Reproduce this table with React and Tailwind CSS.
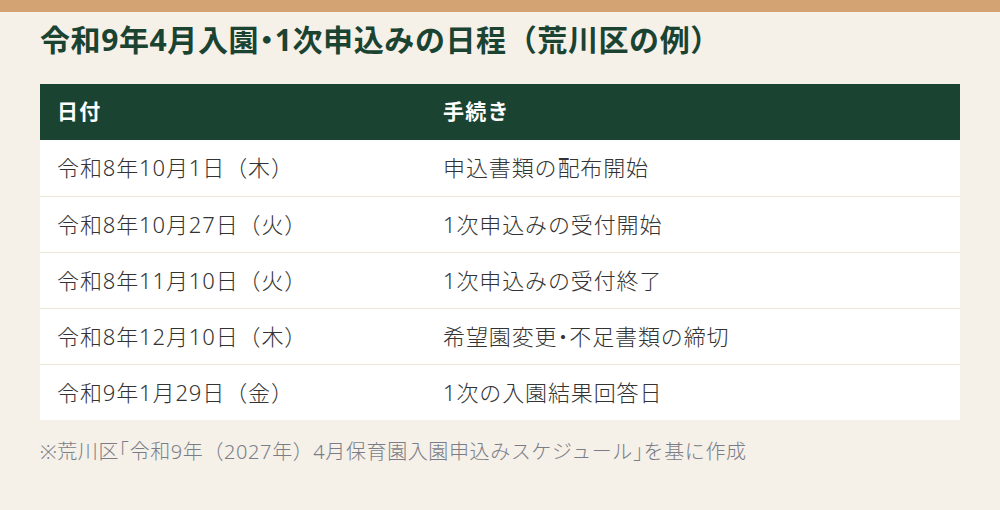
import React from "react";

const H = ({ children }) => (
  <span className="[font-feature-settings:'halt']">{children}</span>
);

const rows = [
  ["令和8年10月1日（木）", "申込書類の配布開始"],
  ["令和8年10月27日（火）", "1次申込みの受付開始"],
  ["令和8年11月10日（火）", "1次申込みの受付終了"],
  ["令和8年12月10日（木）", <>希望園変更<H>・</H>不足書類の締切</>],
  ["令和9年1月29日（金）", "1次の入園結果回答日"],
];

export default function App() {
  return (
    <div
      className="w-[1000px] h-[510px] bg-[#f5f0e8] overflow-hidden"
      style={{ fontFamily: '"Noto Sans", "Noto Sans CJK JP", sans-serif' }}
    >
      <div className="h-[12px] bg-[#d4a373]" />
      <div className="px-[40px]">
        <h1 className="mt-[6px] text-[30px] leading-[44px] font-bold text-[#1b4332] tracking-[0.02em]">
          令和9年4月入園<H>・</H>1次申込みの日程（荒川区の例）
        </h1>
        <table className="mt-[22px] w-[920px] border-collapse">
          <thead>
            <tr className="bg-[#1b4332] text-white h-[56px]">
              <th className="w-[387px] text-left pl-[17px] text-[21px] font-bold tracking-[0.06em]">日付</th>
              <th className="text-left pl-[16px] text-[21px] font-bold tracking-[0.06em]">手続き</th>
            </tr>
          </thead>
          <tbody>
            {rows.map((r, i) => (
              <tr
                key={i}
                className={
                  "bg-white h-[56px] text-[#333333] text-[22px] font-light tracking-[0.04em] " +
                  (i < rows.length - 1 ? "border-b border-[#ece6d5]" : "")
                }
              >
                <td className="pl-[17px]">{r[0]}</td>
                <td className="pl-[16px]">{r[1]}</td>
              </tr>
            ))}
          </tbody>
        </table>
        <p className="mt-[18px] text-[20px] leading-[28px] font-light text-[#7a7d87] tracking-[0.03em]">
          ※荒川区<H>「</H>令和9年（2027年）4月保育園入園申込みスケジュール<H>」</H>を基に作成
        </p>
      </div>
    </div>
  );
}
